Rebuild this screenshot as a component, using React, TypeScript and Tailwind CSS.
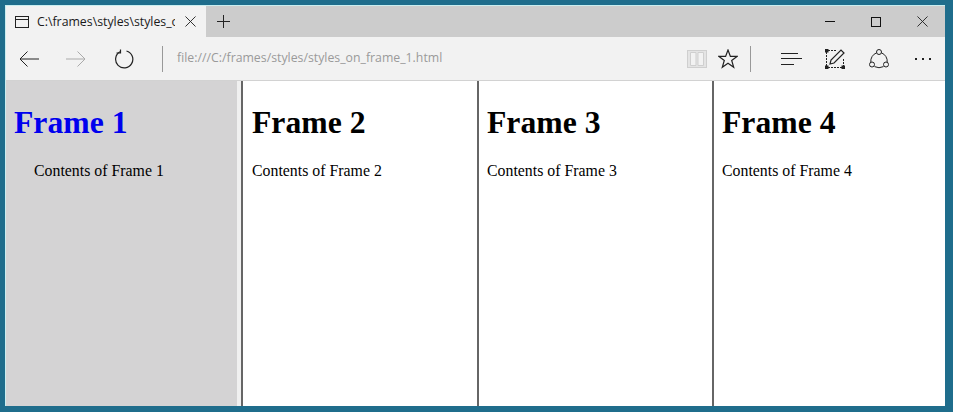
import React from 'react';

const FrameDivider = () => <div className="w-[2px] shrink-0 bg-[#666666]" />;

const Frame: React.FC<{ n: number; className: string }> = ({ n, className }) => (
  <div className={`pt-[19px] bg-white ${className}`}>
    <h1 className="text-[31.7px] leading-[46px] font-bold text-black">Frame {n}</h1>
    <p className="text-[15.85px] leading-[18px] mt-[16px]">Contents of Frame {n}</p>
  </div>
);

const CloseIcon: React.FC<{ size: number; className?: string }> = ({ size, className }) => (
  <svg width={size} height={size} viewBox="0 0 12 12" fill="none" stroke="#222" strokeWidth="1" className={`shrink-0 ${className ?? ''}`}>
    <path d="M0.5 0.5l11 11M11.5 0.5l-11 11" />
  </svg>
);

export default function App() {
  return (
    <div className="w-[953px] h-[412px] bg-[#1f6d8c] pl-[5px] pr-[8px] pt-[5px] pb-[6px] overflow-hidden">
      <div className="h-full flex flex-col border-t border-l border-[#c9eef0] bg-white" style={{ fontFamily: '"Liberation Serif", serif' }}>
        {/* tab strip */}
        <div className="h-[31px] shrink-0 flex bg-[#cccccc] text-[#1a1a1a]">
          <div className="w-[200px] flex items-center bg-[#f2f2f2] pl-[9px]">
            <svg width="14" height="12" viewBox="0 0 14 12" fill="none" stroke="#222" strokeWidth="1" className="shrink-0">
              <rect x="0.5" y="0.5" width="13" height="11" />
              <path d="M0.5 3.5h13" />
            </svg>
            <span className="ml-[8px] w-[138px] h-[18px] leading-[18px] overflow-hidden whitespace-nowrap text-[12.3px] font-['Open_Sans',sans-serif]">C:\frames\styles\styles_on_frame_1</span>
            <CloseIcon size={11} className="ml-[10px]" />
          </div>
          <div className="w-[34px] flex items-center justify-center">
            <svg width="13" height="13" viewBox="0 0 13 13" fill="none" stroke="#222" strokeWidth="1">
              <path d="M6.5 0v13M0 6.5h13" />
            </svg>
          </div>
          <div className="flex-1 flex items-center justify-end pr-[17px]">
            <div className="w-[10px] h-px bg-[#111]" />
            <div className="ml-[36px] w-[10px] h-[10px] border border-[#111]" />
            <CloseIcon size={11} className="ml-[36px]" />
          </div>
        </div>
        {/* toolbar */}
        <div className="h-[44px] shrink-0 flex items-center bg-[#f2f2f2] border-b border-[#d2d2d2] text-[#222]">
          <svg width="20" height="16" viewBox="0 0 20 16" fill="none" stroke="#222" strokeWidth="1" className="ml-[13px] shrink-0">
            <path d="M20 8H1M8.5 0.5L1 8l7.5 7.5" />
          </svg>
          <svg width="20" height="16" viewBox="0 0 20 16" fill="none" stroke="#aaaaaa" strokeWidth="1" className="ml-[27px] shrink-0">
            <path d="M0 8h19M11.5 0.5L19 8l-7.5 7.5" />
          </svg>
          <svg width="20" height="20" viewBox="0 0 20 20" fill="none" stroke="#222" strokeWidth="1.2" className="ml-[28px] shrink-0">
            <path d="M6 2.8A8.6 8.6 0 1 0 12.5 2" />
            <path d="M6.5 0.5V4H2.5" />
          </svg>
          <div className="w-px h-[26px] bg-[#999999] ml-[28px]" />
          <span className="ml-[14px] text-[12.3px] text-[#9a9a9a] font-['Open_Sans',sans-serif]">file:///C:/frames/styles/styles_on_frame_1.html</span>
          <div className="flex-1" />
          <svg width="20" height="18" viewBox="0 0 20 18" fill="#e4e4e4" stroke="#cfcfcf" strokeWidth="1" className="shrink-0">
            <rect x="0.5" y="0.5" width="19" height="17" />
            <path d="M3.5 2.5h5.5v13h-5.5zM11 2.5h5.5v13H11z" fill="#f2f2f2" />
          </svg>
          <svg width="20" height="20" viewBox="0 0 20 20" fill="none" stroke="#222" strokeWidth="1.2" className="ml-[11px] shrink-0">
            <path d="M10 1l2.4 6.4H19l-5.3 4 2 6.9L10 14.3l-5.7 4 2-6.9-5.3-4h6.6z" />
          </svg>
          <div className="w-px h-[26px] bg-[#999999] ml-[12px]" />
          <svg width="21" height="12" viewBox="0 0 21 12" fill="none" stroke="#222" strokeWidth="1" className="ml-[30px] shrink-0">
            <path d="M0 0.5h17M0 5.5h21M0 11.5h13" />
          </svg>
          <svg width="20" height="20" viewBox="0 0 20 20" fill="none" stroke="#222" strokeWidth="1" className="ml-[23px] shrink-0">
            <path d="M1.5 3v14M3 18.5h14M18.5 10v7M3 1.5h9" strokeDasharray="2 1" />
            <rect x="0" y="0" width="3" height="3" fill="#222" />
            <rect x="0" y="17" width="3" height="3" fill="#222" />
            <rect x="17" y="17" width="3" height="3" fill="#222" />
            <path d="M5 15l1-4L16 1l3 3L9 14z" strokeWidth="1.2" />
          </svg>
          <svg width="20" height="20" viewBox="0 0 20 20" fill="none" stroke="#222" strokeWidth="1" className="ml-[24px] shrink-0">
            <circle cx="10" cy="3" r="2.5" />
            <circle cx="3" cy="15.5" r="2.5" />
            <circle cx="17" cy="15.5" r="2.5" />
            <path d="M7.7 3.8A9 9 0 0 0 1.8 13.2M12.3 3.8A9 9 0 0 1 18.2 13.2M5.5 17.6a10 10 0 0 0 9 0" />
          </svg>
          <div className="ml-[26px] mr-[14px] flex gap-[5px]">
            <div className="w-[2px] h-[2px] bg-[#222]" />
            <div className="w-[2px] h-[2px] bg-[#222]" />
            <div className="w-[2px] h-[2px] bg-[#222]" />
          </div>
        </div>
        {/* frames */}
        <div className="flex-1 flex min-h-0 text-black">
          <div className="w-[231px] shrink-0 bg-[#d4d3d4] pl-[8px] pt-[19px]">
            <h1 className="text-[31.7px] leading-[46px] font-bold text-[#0000ee]">Frame 1</h1>
            <p className="text-[15.85px] leading-[18px] mt-[16px] ml-[20px]">Contents of Frame 1</p>
          </div>
          <div className="w-[4px] shrink-0 bg-[#f0f0f0]" />
          <FrameDivider />
          <Frame n={2} className="w-[234px] shrink-0 pl-[9px]" />
          <FrameDivider />
          <Frame n={3} className="w-[233px] shrink-0 pl-[8px]" />
          <FrameDivider />
          <Frame n={4} className="flex-1 pl-[8px]" />
        </div>
      </div>
    </div>
  );
}
